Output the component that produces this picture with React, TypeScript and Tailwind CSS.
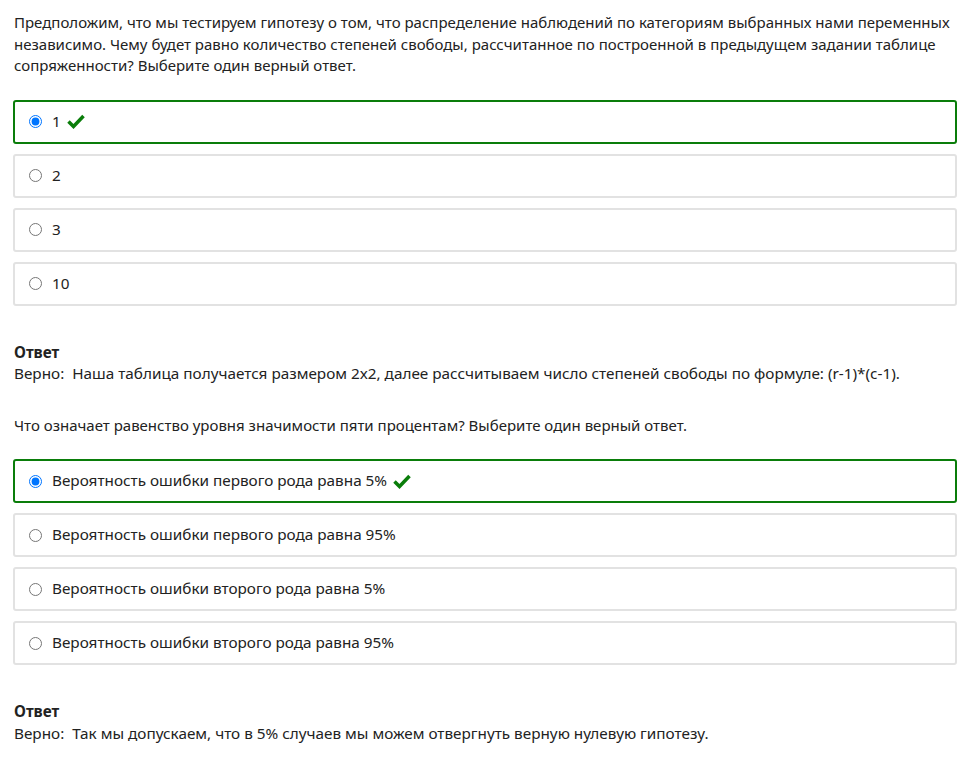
const font = { fontFamily: '"Noto Sans", "Open Sans", sans-serif' };

interface Question {
  text: string;
  options: string[];
  correct: number;
  answer: string;
}

const questions: Question[] = [
  {
    text: 'Предположим, что мы тестируем гипотезу о том, что распределение наблюдений по категориям выбранных нами переменных независимо. Чему будет равно количество степеней свободы, рассчитанное по построенной в предыдущем задании таблице сопряженности? Выберите один верный ответ.',
    options: ['1', '2', '3', '10'],
    correct: 0,
    answer: 'Наша таблица получается размером 2x2, далее рассчитываем число степеней свободы по формуле: (r-1)*(c-1).',
  },
  {
    text: 'Что означает равенство уровня значимости пяти процентам? Выберите один верный ответ.',
    options: [
      'Вероятность ошибки первого рода равна 5%',
      'Вероятность ошибки первого рода равна 95%',
      'Вероятность ошибки второго рода равна 5%',
      'Вероятность ошибки второго рода равна 95%',
    ],
    correct: 0,
    answer: 'Так мы допускаем, что в 5% случаев мы можем отвергнуть верную нулевую гипотезу.',
  },
];

function Check() {
  return (
    <svg width="18" height="15" viewBox="0 0 18 15" className="ml-1.5 inline-block">
      <path d="M1.5 7.5 L6.5 12.5 L16.5 2" fill="none" stroke="#0a7d0a" strokeWidth="3.5" />
    </svg>
  );
}

export default function App() {
  return (
    <div className="bg-white text-[#222] text-[15.3px] leading-[21.5px] px-[13px] pt-[12px] w-[970px] h-[762px] overflow-hidden" style={font}>
      {questions.map((q, qi) => (
        <div key={qi} className={qi === 0 ? '' : 'mt-[30px]'}>
          <p className="pl-px text-[15px]">{q.text}</p>
          <div className="mt-[23px] flex flex-col gap-[10px]">
            {q.options.map((opt, i) => (
              <label
                key={i}
                className={`h-[44px] rounded-[3px] border-2 flex items-center pl-[14px] gap-[10px] ${
                  i === q.correct ? 'border-[#0a7d0a]' : 'border-[#e2e2e2]'
                }`}
              >
                <input type="radio" name={`q${qi}`} defaultChecked={i === q.correct} className="m-0 w-[13px] h-[13px]" />
                <span className="flex items-center">
                  {opt}
                  {i === q.correct && <Check />}
                </span>
              </label>
            ))}
          </div>
          <div className="mt-[36px] px-px">
            <div className="font-bold">Ответ</div>
            <div>
              Верно:&nbsp; {q.answer}
            </div>
          </div>
        </div>
      ))}
    </div>
  );
}
